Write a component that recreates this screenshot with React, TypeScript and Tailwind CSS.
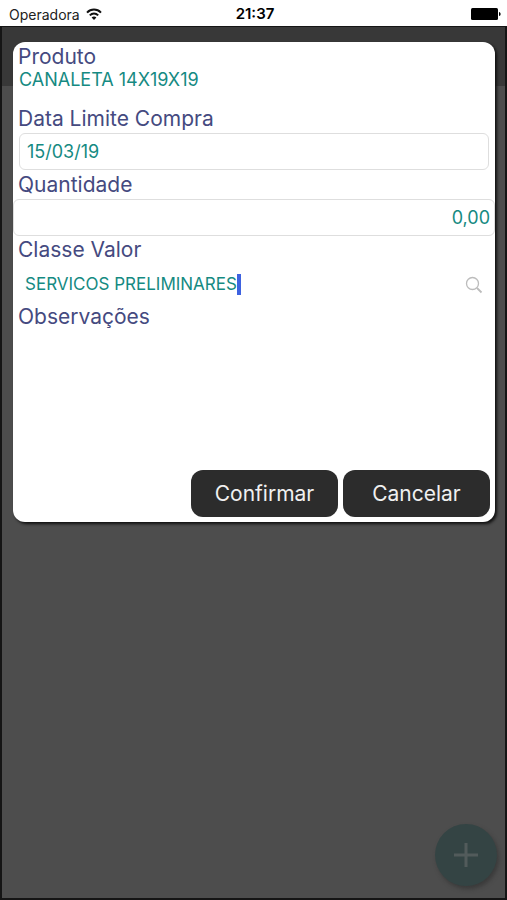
import React from "react";

function StatusBar() {
  return (
    <header className="grid h-[26px] grid-cols-3 items-center bg-white pt-0.5 pr-1.5 pl-[9px] text-black">
      <div className="flex items-center gap-1.5 text-[14px] text-[#222]">
        <span>Operadora</span>
        <svg viewBox="0 0 16 12" className="h-3 w-4" fill="none" stroke="#111" strokeWidth="2">
          <path d="M1 4.6C5 .6 11 .6 15 4.6" />
          <path d="M3.8 7.4c2.4-2.4 6-2.4 8.4 0" />
          <path d="M8 12 5.6 9.5c1.4-1.3 3.4-1.3 4.8 0z" fill="#111" stroke="none" />
        </svg>
      </div>
      <span className="text-center text-[15px] font-semibold">21:37</span>
      <svg viewBox="0 0 30 12" className="h-3 w-[30px] justify-self-end">
        <rect x="0" y="0" width="27" height="12" rx="1.5" fill="#000" />
        <path d="M28 4c1 0 1.600 1 1.600 2S29 8 28 8z" fill="#000" />
      </svg>
    </header>
  );
}

function Label({ htmlFor, children }: { htmlFor: string; children: React.ReactNode }) {
  return (
    <label htmlFor={htmlFor} className="block h-7 px-[5px] text-[21px] leading-7 text-[#454a80]">
      {children}
    </label>
  );
}

function ItemDialog() {
  return (
    <form
      role="dialog"
      onSubmit={(e) => e.preventDefault()}
      className="flex min-h-[480px] flex-col rounded-xl bg-white pt-px pb-[5px] text-[18px] text-[#158a82] shadow-[2px_2px_3px_#111]"
    >
      <Label htmlFor="produto">Produto</Label>
      <output id="produto" className="mb-4 block h-[18px] px-[6px] text-[18px] leading-[18px]">
        CANALETA 14X19X19
      </output>

      <Label htmlFor="data">Data Limite Compra</Label>
      <div className="mb-px px-[6px]">
        <input
          id="data"
          defaultValue="15/03/19"
          className="block h-[37px] w-full rounded-md border border-[#dedede] px-[7px] outline-none"
        />
      </div>

      <Label htmlFor="quantidade">Quantidade</Label>
      <input
        id="quantidade"
        defaultValue="0,00"
        className="block h-[37px] w-full rounded-md border border-[#dedede] px-1 text-right outline-none"
      />

      <Label htmlFor="classe">Classe Valor</Label>
      <div className="flex h-[39px] items-center px-3 pt-0.5 text-[17px]">
        <input id="classe" defaultValue="SERVICOS PRELIMINARES" className="field-sizing-content outline-none" />
        <span className="h-[21px] w-1 bg-[#3e62e0]" />
        <button type="button" aria-label="Buscar" className="ml-auto">
          <svg viewBox="0 0 18 18" className="h-[18px] w-[18px]" fill="none" stroke="#bcbcbc">
            <circle cx="7.500" cy="7.500" r="6" strokeWidth="1.300" />
            <path d="m12 12 4.500 4.500" strokeWidth="1.800" />
          </svg>
        </button>
      </div>

      <Label htmlFor="observacoes">Observações</Label>
      <textarea id="observacoes" className="min-h-0 w-full flex-1 resize-none px-[6px] outline-none" />

      <div className="flex justify-end gap-[5px] px-[5px] text-[21px] text-[#f0f0f0]">
        <button type="submit" className="h-[47px] w-[147px] rounded-xl bg-[#2c2c2c]">
          Confirmar
        </button>
        <button type="button" className="h-[47px] w-[147px] rounded-xl bg-[#2c2c2c]">
          Cancelar
        </button>
      </div>
    </form>
  );
}

export default function App() {
  return (
    <div className="flex min-h-screen flex-col font-[Inter,sans-serif]">
      <StatusBar />
      <main className="relative flex-1 border-x-2 border-t border-b-2 border-[#151515] bg-[#4d4d4d]">
        <div className="h-[59px] bg-[#383838]" />
        <div className="absolute inset-x-0 top-0 pt-[15px] pr-[10px] pl-[11px]">
          <ItemDialog />
        </div>
        <button
          type="button"
          aria-label="Adicionar"
          className="absolute right-2 bottom-3 flex h-[62px] w-[62px] items-center justify-center rounded-full bg-[#344444] shadow-[2px_3px_4px_#3a3a3a]"
        >
          <svg viewBox="0 0 24 24" className="h-6 w-6" stroke="#525b5b" strokeWidth="3">
            <path d="M12 0v24M0 12h24" />
          </svg>
        </button>
      </main>
    </div>
  );
}
